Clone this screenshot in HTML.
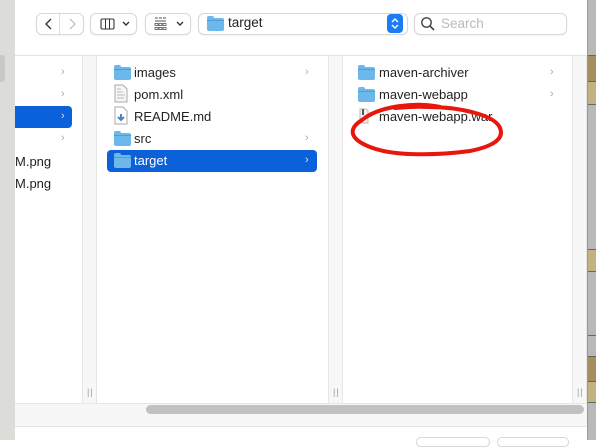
<!DOCTYPE html>
<html><head><style>
*{margin:0;padding:0;box-sizing:border-box}
body{width:596px;height:440px;overflow:hidden;background:#fff;font-family:"Liberation Sans",sans-serif;font-size:13px;color:#222;position:relative}
.a{position:absolute}
.btn{position:absolute;border:1px solid #d8d8d8;border-radius:6px;background:#fff;box-shadow:0 0.5px 1px rgba(0,0,0,.08)}
.row{position:absolute;height:22px;line-height:22px;white-space:nowrap;margin-top:1px}
.fold{position:absolute;width:17px;height:13px;border-radius:2px;background:#6cb8ea}
.fold:before{content:"";position:absolute;left:0;top:-2px;width:7px;height:3px;background:#6cb8ea;border-radius:2px 2px 0 0}
.fold:after{content:"";position:absolute;left:0;top:2px;width:17px;height:1px;background:#4a9fd8}
.chev{position:absolute;color:#aaa;font-size:11px}
.div{position:absolute;top:56px;height:347px;width:15px;background:#f7f7f7;border-left:1px solid #e6e6e6;border-right:1px solid #e6e6e6}
.div span{position:absolute;bottom:6px;left:4px;font-size:9px;color:#999;letter-spacing:1px}
</style></head><body>
<div class="a" style="left:0;top:0;width:15px;height:440px;background:#dcdcd8"></div>
<div class="a" style="left:0;top:55px;width:5px;height:27px;background:#c8c8c4;border-radius:0 3px 3px 0"></div>
<div class="a" style="left:587px;top:0;width:9px;height:440px;background:#b9b9b9;border-left:1px solid #999"></div>
<div class="a" style="left:588px;top:55px;width:8px;height:26px;background:#a38f5c;border-top:1px solid #666"></div>
<div class="a" style="left:588px;top:81px;width:8px;height:24px;background:#c2b283;border-top:1px solid #666;border-bottom:1px solid #666"></div>
<div class="a" style="left:588px;top:249px;width:8px;height:23px;background:#c2b283;border-top:1px solid #666;border-bottom:1px solid #666"></div>
<div class="a" style="left:588px;top:335px;width:8px;height:1px;background:#666"></div>
<div class="a" style="left:588px;top:356px;width:8px;height:25px;background:#a38f5c;border-top:1px solid #666"></div>
<div class="a" style="left:588px;top:381px;width:8px;height:22px;background:#c2b283;border-top:1px solid #666;border-bottom:1px solid #666"></div>
<div class="a" style="left:15px;top:55px;width:572px;height:1px;background:#e2e2e2"></div>
<div class="btn" style="left:36px;top:13px;width:48px;height:22px"></div>
<div class="a" style="left:59px;top:14px;width:1px;height:20px;background:#ddd"></div>
<svg class="a" style="left:36px;top:13px" width="48" height="22"><path d="M15 6 L10 11 L15 16" stroke="#333" stroke-width="1.4" fill="none"/><path d="M34 6 L39 11 L34 16" stroke="#bbb" stroke-width="1.2" fill="none"/></svg>
<div class="btn" style="left:90px;top:13px;width:47px;height:22px"></div>
<svg class="a" style="left:90px;top:13px" width="47" height="22"><rect x="11" y="6" width="13" height="10" rx="1.5" stroke="#333" stroke-width="1.1" fill="none"/><path d="M15.5 6v10M19.5 6v10" stroke="#333" stroke-width="1"/><path d="M33 9l3 3 3-3" stroke="#333" stroke-width="1.4" fill="none"/></svg>
<div class="btn" style="left:145px;top:13px;width:46px;height:22px"></div>
<svg class="a" style="left:145px;top:13px" width="46" height="22"><path d="M10 5h3M14 5h3M18 5h3M10 8h11" stroke="#555" stroke-width="1"/><rect x="10" y="10.5" width="3" height="2" stroke="#555" stroke-width=".8" fill="none"/><rect x="14" y="10.5" width="3" height="2" stroke="#555" stroke-width=".8" fill="none"/><rect x="18" y="10.5" width="3" height="2" stroke="#555" stroke-width=".8" fill="none"/><rect x="10" y="14.5" width="3" height="2" stroke="#555" stroke-width=".8" fill="none"/><rect x="14" y="14.5" width="3" height="2" stroke="#555" stroke-width=".8" fill="none"/><rect x="18" y="14.5" width="3" height="2" stroke="#555" stroke-width=".8" fill="none"/><path d="M32 9l3 3 3-3" stroke="#333" stroke-width="1.4" fill="none"/></svg>
<div class="btn" style="left:198px;top:13px;width:210px;height:22px"></div>
<div class="fold" style="left:207px;top:18px"></div>
<div class="a" style="left:228px;top:15px;font-size:13.5px;color:#222">target</div>
<div class="a" style="left:387px;top:14px;width:16px;height:19px;background:#1d7cf2;border-radius:4px"></div>
<svg class="a" style="left:387px;top:14px" width="16" height="19"><path d="M5 8l3-3 3 3M5 11l3 3 3-3" stroke="#fff" stroke-width="1.4" fill="none"/></svg>
<div class="btn" style="left:414px;top:13px;width:153px;height:22px"></div>
<svg class="a" style="left:420px;top:16px" width="16" height="16"><circle cx="6.5" cy="6.5" r="4.7" stroke="#444" stroke-width="1.4" fill="none"/><path d="M10 10l4 4" stroke="#444" stroke-width="1.6"/></svg>
<div class="a" style="left:441px;top:16px;font-size:13.5px;color:#bbb">Search</div>
<div class="chev" style="left:61px;top:66px">›</div>
<div class="chev" style="left:61px;top:88px">›</div>
<div class="a" style="left:15px;top:106px;width:57px;height:22px;background:#0b61d9;border-radius:0 4px 4px 0"></div>
<div class="chev" style="left:61px;top:110px;color:#cfe0f8">›</div>
<div class="chev" style="left:61px;top:132px">›</div>
<div class="row" style="left:15px;top:150px">M.png</div>
<div class="row" style="left:15px;top:172px">M.png</div>
<div class="div" style="left:82px"><span>||</span></div>
<div class="fold" style="left:114px;top:67px"></div><div class="row" style="left:134px;top:61px">images</div><div class="chev" style="left:305px;top:66px">›</div>
<svg class="a" style="left:114px;top:84px" width="14" height="19"><path d="M1 1h8l4 4v13H1z" fill="#f6f6f6" stroke="#aaa"/><path d="M3 5h4M3 8h6M3 11h8M3 14h7" stroke="#bbb"/></svg><div class="row" style="left:134px;top:83px">pom.xml</div>
<svg class="a" style="left:114px;top:106px" width="14" height="19"><path d="M1 1h8l4 4v13H1z" fill="#fff" stroke="#aaa"/><path d="M7 8v6M4 11l3 3 3-3" stroke="#4a86b8" stroke-width="2" fill="none"/></svg><div class="row" style="left:134px;top:105px">README.md</div>
<div class="fold" style="left:114px;top:133px"></div><div class="row" style="left:134px;top:127px">src</div><div class="chev" style="left:305px;top:132px">›</div>
<div class="a" style="left:107px;top:150px;width:210px;height:22px;background:#0b61d9;border-radius:4px"></div>
<div class="fold" style="left:114px;top:155px"></div><div class="row" style="left:134px;top:149px;color:#fff">target</div><div class="chev" style="left:305px;top:154px;color:#cfe0f8">›</div>
<div class="div" style="left:328px"><span>||</span></div>
<div class="fold" style="left:358px;top:67px"></div><div class="row" style="left:379px;top:61px">maven-archiver</div><div class="chev" style="left:550px;top:66px">›</div>
<div class="fold" style="left:358px;top:89px"></div><div class="row" style="left:379px;top:83px">maven-webapp</div><div class="chev" style="left:550px;top:88px">›</div>
<svg class="a" style="left:359px;top:108px" width="10" height="16"><path d="M1 1h6l2 2v12H1z" fill="#f2f2f2" stroke="#bbb"/><path d="M4 1v6" stroke="#555" stroke-width="2"/></svg><div class="row" style="left:379px;top:105px">maven-webapp.war</div>
<div class="div" style="left:572px"><span>||</span></div>
<svg class="a" style="left:340px;top:95px" width="170" height="70"><path d="M100 12 C80 7 40 10 22 25 C6 35 12 45 30 52 C55 62 100 60 130 56 C150 52 165 45 160 33 C155 20 120 12 88 12 C70 11 60 13 55 13" stroke="#e8160c" stroke-width="4" fill="none" stroke-linecap="round"/></svg>
<div class="a" style="left:15px;top:403px;width:572px;height:24px;background:#f7f7f7;border-top:1px solid #e6e6e6;border-bottom:1px solid #e2e2e2"></div>
<div class="a" style="left:146px;top:405px;width:438px;height:9px;background:#c1c1c1;border-radius:5px"></div>
<div class="btn" style="left:416px;top:437px;width:74px;height:10px"></div>
<div class="btn" style="left:497px;top:437px;width:72px;height:10px"></div>
</body></html>
